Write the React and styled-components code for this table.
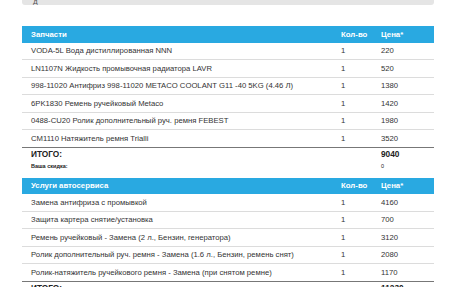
import React from "react";
import styled, { createGlobalStyle } from "styled-components";

const Global = createGlobalStyle`
  html, body { margin: 0; padding: 0; background: #fff; }
  body { font-family: "Liberation Sans", Arial, sans-serif; color: #333; }
`;

const Page = styled.div`
  width: 456px;
  height: 287px;
  overflow: hidden;
  padding: 0 22px;
  box-sizing: border-box;
`;

const TopBox = styled.div`
  height: 5px;
  background: #e5e5e5;
  border-radius: 0 0 3px 3px;
  overflow: hidden;
  display: flex;
  align-items: flex-end;
  padding-left: 11px;
  font-size: 8px;
  line-height: 6px;
  color: #555;
  margin-bottom: 21px;
`;

const Section = styled.div`
  display: flex;
  flex-direction: column;
  margin-bottom: 6px;
`;

const Grid = styled.div`
  display: grid;
  grid-template-columns: 310px 40px 62px;
  align-items: center;
  box-sizing: border-box;
`;

const Head = styled(Grid)`
  height: 16.5px;
  background: #29a9e1;
  color: #fff;
  font-weight: bold;
  font-size: 7.8px;
`;

const Row = styled(Grid)`
  height: 17.5px;
  border-bottom: 1px solid ${(p) => (p.$last ? "#777" : "#dcdcdc")};
  font-size: 7.7px;
`;

const TotalRow = styled(Grid)`
  height: 12px;
  font-weight: bold;
  font-size: ${(p) => (p.$small ? "5.5px" : "8.3px")};
  color: #222;
`;

const Cell = styled.div`
  padding-left: 9px;
  white-space: nowrap;
  overflow: hidden;
`;

const Plain = styled.span`
  font-weight: normal;
`;

const parts = [
  ["VODA-5L Вода дистиллированная NNN", 1, 220],
  ["LN1107N Жидкость промывочная радиатора LAVR", 1, 520],
  ["998-11020 Антифриз 998-11020 METACO COOLANT G11 -40 5KG (4.46 Л)", 1, 1380],
  ["6PK1830 Ремень ручейковый Metaco", 1, 1420],
  ["0488-CU20 Ролик дополнительный руч. ремня FEBEST", 1, 1980],
  ["CM1110 Натяжитель ремня Trialli", 1, 3520],
];

const services = [
  ["Замена антифриза с промывкой", 1, 4160],
  ["Защита картера снятие/установка", 1, 700],
  ["Ремень ручейковый - Замена (2 л., Бензин, генератора)", 1, 3120],
  ["Ролик дополнительный руч. ремня - Замена (1.6 л., Бензин, ремень снят)", 1, 2080],
  ["Ролик-натяжитель ручейкового ремня - Замена (при снятом ремне)", 1, 1170],
];

function Block({ title, items, total, discount }) {
  return (
    <Section>
      <Head>
        <Cell>{title}</Cell>
        <Cell>Кол-во</Cell>
        <Cell>Цена*</Cell>
      </Head>
      {items.map((it, i) => (
        <Row key={i} $last={i === items.length - 1}>
          <Cell>{it[0]}</Cell>
          <Cell>{it[1]}</Cell>
          <Cell>{it[2]}</Cell>
        </Row>
      ))}
      <TotalRow>
        <Cell>ИТОГО:</Cell>
        <Cell />
        <Cell>{total}</Cell>
      </TotalRow>
      {discount !== undefined && (
        <TotalRow $small>
          <Cell>Ваша скидка:</Cell>
          <Cell />
          <Cell>
            <Plain>{discount}</Plain>
          </Cell>
        </TotalRow>
      )}
    </Section>
  );
}

export default function App() {
  return (
    <>
      <Global />
      <Page>
        <TopBox>д</TopBox>
        <Block title="Запчасти" items={parts} total="9040" discount="0" />
        <Block title="Услуги автосервиса" items={services} total="11230" />
      </Page>
    </>
  );
}
